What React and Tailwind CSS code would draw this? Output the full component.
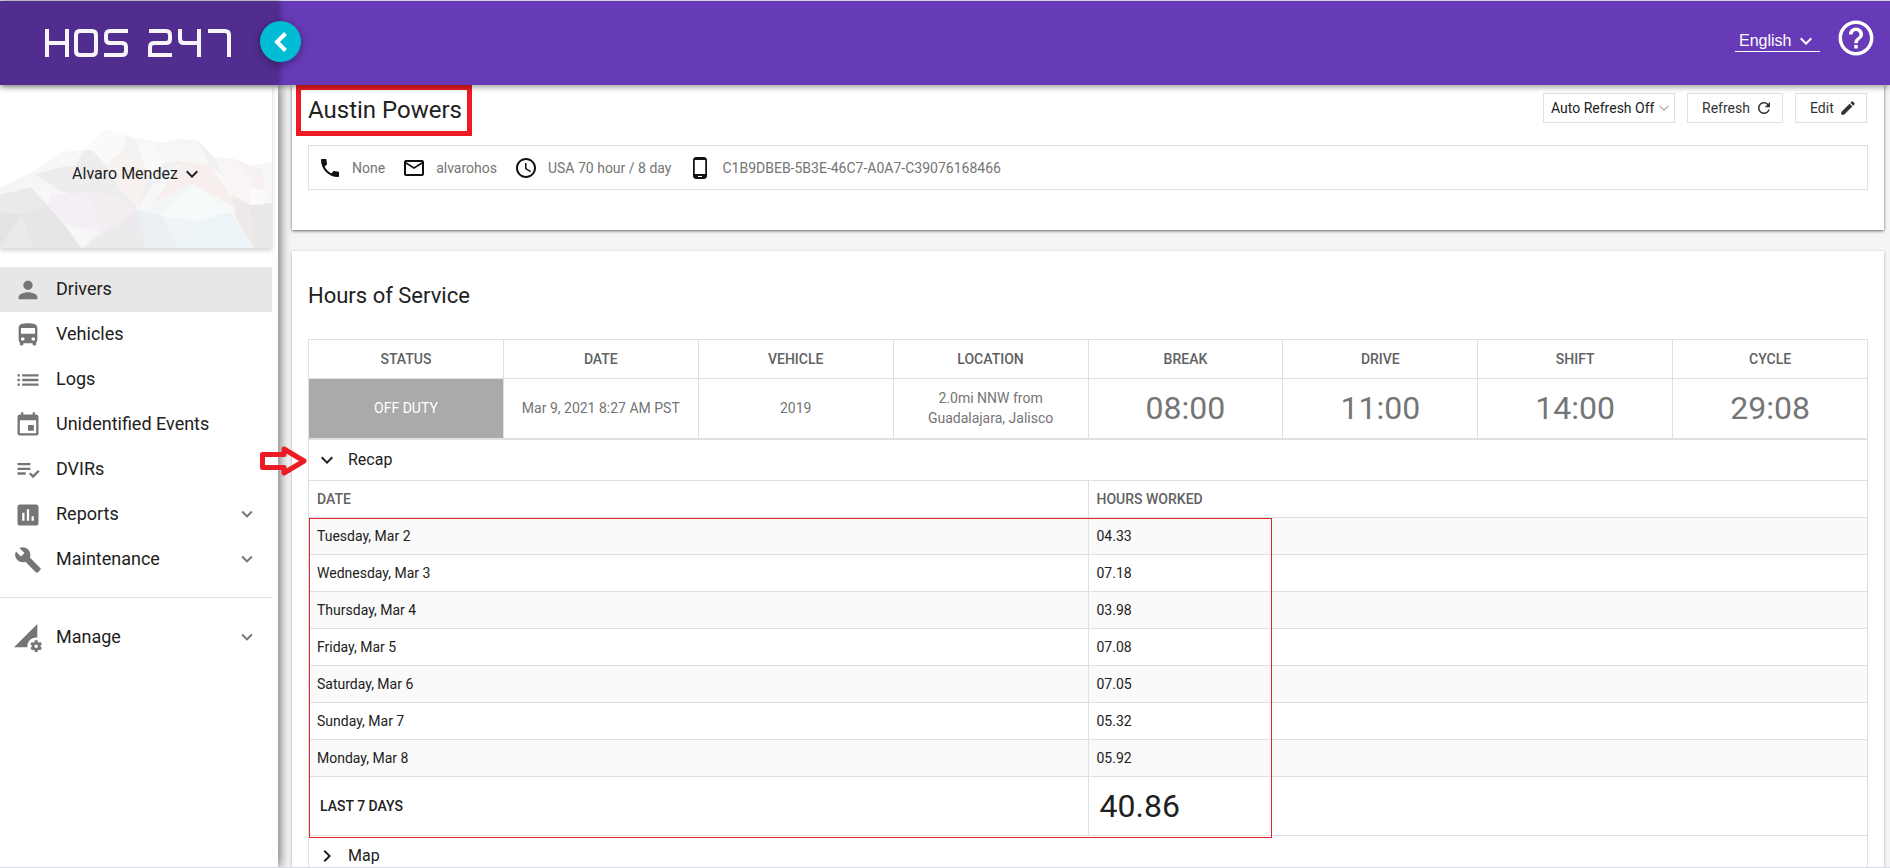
import { useState } from 'react'
import {
  MdPerson, MdDirectionsBus, MdList, MdEvent, MdPlaylistAddCheck, MdAssessment, MdBuild,
  MdPermDataSetting, MdExpandMore, MdChevronRight, MdPhone, MdMailOutline,
  MdAccessTime, MdPhoneAndroid, MdHelpOutline, MdRefresh, MdEdit,
} from 'react-icons/md'

const navItems = [
  { label: 'Drivers', icon: MdPerson, active: true },
  { label: 'Vehicles', icon: MdDirectionsBus },
  { label: 'Logs', icon: MdList },
  { label: 'Unidentified Events', icon: MdEvent },
  { label: 'DVIRs', icon: MdPlaylistAddCheck },
  { label: 'Reports', icon: MdAssessment, expandable: true },
  { label: 'Maintenance', icon: MdBuild, expandable: true },
]

const contact = [
  { icon: MdPhone, text: 'None' },
  { icon: MdMailOutline, text: 'alvarohos' },
  { icon: MdAccessTime, text: 'USA 70 hour / 8 day' },
  { icon: MdPhoneAndroid, text: 'C1B9DBEB-5B3E-46C7-A0A7-C39076168466' },
]

const recap = [
  ['Tuesday, Mar 2', '04.33'],
  ['Wednesday, Mar 3', '07.18'],
  ['Thursday, Mar 4', '03.98'],
  ['Friday, Mar 5', '07.08'],
  ['Saturday, Mar 6', '07.05'],
  ['Sunday, Mar 7', '05.32'],
  ['Monday, Mar 8', '05.92'],
]

const statusHeads = ['STATUS', 'DATE', 'VEHICLE', 'LOCATION', 'BREAK', 'DRIVE', 'SHIFT', 'CYCLE']
const clocks = ['08:00', '11:00', '14:00', '29:08']

function Logo() {
  return (
    <svg role="img" aria-label="HOS 247" className="h-7 w-[186px]" viewBox="0 0 186 28" fill="none" stroke="#f7f5fa" strokeWidth="4">
      <path d="M2 0V28M22 0V28M2 14H22" />
      <path d="M33 2H47Q51 2 51 6V22Q51 26 47 26H35Q31 26 31 22V6Q31 2 35 2" />
      <path d="M83 2H65Q61 2 61 6V10Q61 14 65 14H77Q81 14 81 18V22Q81 26 77 26H59" />
      <path d="M104 2H121Q125 2 125 6V10Q125 14 121 14H109Q105 14 105 18V26H127" />
      <path d="M135 0V10Q135 14 139 14H154M154 0V28" />
      <path d="M163 2H180Q184 2 184 6V28" />
    </svg>
  )
}

// Low-poly mountains behind the user name
function Mountains() {
  return (
    <svg className="absolute inset-0 h-full w-full" viewBox="0 0 272 163" preserveAspectRatio="none" aria-hidden="true">
      <path fill="#f7f7f7" d="M0 103L32 87L62 67L83 65L107 44L127 51L154 56L178 62L197 55L214 72L232 79L250 80L272 77V163H0Z" />
      <path fill="#ededee" d="M34 89L62 82L76 80L83 65L92 65L106 80L138 103L136 125L60 106Z" />
      <path fill="#fafafa" d="M83 65L107 44L127 51L123 66L106 80L92 65Z" />
      <path fill="#f4f1f1" d="M127 51L138 59L148 90L106 80L123 66Z" />
      <path fill="#fbfafa" d="M138 59L154 60L165 78L148 90Z" />
      <path fill="#f8f5f5" d="M154 60L178 54L197 55L182 76L165 78Z" />
      <path fill="#f7f1ef" d="M106 80L123 66L148 90L138 124L120 104Z" />
      <path fill="#eff0f1" d="M165 78L182 76L150 103L138 125L148 90Z" />
      <path fill="#f6efed" d="M182 76L210 80L240 125L192 99L150 124Z" />
      <path fill="#f1f1f1" d="M197 55L214 72L232 98L210 80Z" />
      <path fill="#faf5f5" d="M214 72L235 74L252 92L249 119L232 110Z" />
      <path fill="#f6f0f0" d="M235 74L262 85L267 119L249 119L252 92Z" />
      <path fill="#f6f6f6" d="M0 103L32 87L60 106L52 109L31 102L0 110Z" />
      <path fill="#e9eaec" d="M0 110L31 102L48 121L66 141L81 163H0Z" />
      <path fill="#e4e4e6" d="M0 127L22 129L0 163Z" />
      <path fill="#e6e5e7" d="M22 129L48 121L81 163H33Z" />
      <path fill="#f4eff4" d="M52 109L88 108L100 148L68 140L48 121Z" />
      <path fill="#f1edf1" d="M88 108L115 111L138 125L82 163L100 148Z" />
      <path fill="#eceaec" d="M138 125L146 163H82Z" />
      <path fill="#f3f5f7" d="M192 99L162 131L138 125Z" />
      <path fill="#eaf0f2" d="M138 125L162 131L178 163H146Z" />
      <path fill="#f7fafb" d="M192 99L230 127L198 136L162 131Z" />
      <path fill="#eff5f7" d="M162 131L198 136L178 163Z" />
      <path fill="#edf4f7" d="M198 136L230 127L254 163H178Z" />
      <path fill="#eeeaea" d="M232 110L249 119L254 163L236 133Z" />
      <path fill="#eae7e7" d="M249 119L272 118V163H254Z" />
      <path fill="#fbfaf9" d="M249 102L267 106L265 119L250 120Z" />
    </svg>
  )
}

function NavItem({ label, icon: Icon, active, expandable }) {
  return (
    <li>
      <a href="#" className={`flex h-[45px] items-center gap-[14px] px-[14px] text-lg text-[#212121] ${active ? 'bg-[#e7e7e7]' : ''}`}>
        <Icon className="size-7 shrink-0 text-[#757575]" />
        <span className="flex-1 pb-0.5">{label}</span>
        {expandable && <MdExpandMore className="mb-0.5 size-[22px] text-[#757575]" />}
      </a>
    </li>
  )
}

function Header() {
  return (
    <header className="relative z-20 flex h-[85px] shrink-0 border-t border-[#d5d0e0] bg-[#673ab7] text-white shadow-[0_2px_6px_rgba(0,0,0,0.4)]">
      <div className="relative flex w-[278px] shrink-0 items-center bg-[#512d8f] pl-[45px] shadow-[2px_0_6px_rgba(0,0,0,0.3)]">
        <Logo />
        <button aria-label="Collapse menu" className="absolute top-5 -right-[23px] flex size-[41px] items-center justify-center rounded-full bg-[#00bcd4] shadow-[0_2px_8px_rgba(0,0,0,0.4)]">
          <svg className="h-5 w-[13px]" viewBox="0 0 13 20" fill="none" stroke="currentColor" strokeWidth="4" aria-hidden="true">
            <path d="M11.500 1.500L3 10L11.500 18.500" />
          </svg>
        </button>
      </div>
      <div className="flex flex-1 items-start justify-end gap-[15px] pr-[13px]">
        <label className="relative mt-7 flex border-b border-white">
          <select aria-label="Language" className="h-[22px] w-[85px] appearance-none bg-transparent pt-0.5 pl-1 font-['Liberation_Sans',Arial,sans-serif] text-base leading-5 outline-none">
            <option>English</option>
          </select>
          <MdExpandMore className="pointer-events-none absolute top-0 right-[2px] size-6" />
        </label>
        <button aria-label="Help" className="mt-4">
          <MdHelpOutline className="size-[42px]" />
        </button>
      </div>
    </header>
  )
}

function Sidebar() {
  return (
    <aside className="w-[278px] shrink-0 bg-white pr-1.5 shadow-[2px_0_10px_rgba(0,0,0,0.55)]">
      <div className="relative h-[163px] shadow-[0_2px_5px_rgba(0,0,0,0.2)]">
        <Mountains />
        <button className="relative flex h-full w-full items-center justify-center gap-[2px] pt-[14px] pl-1 text-base text-[#212121]">
          Alvaro Mendez
          <MdExpandMore className="size-6" />
        </button>
      </div>
      <nav className="pt-[19px]">
        <ul>
          {navItems.map(item => <NavItem key={item.label} {...item} />)}
        </ul>
        <ul className="mt-[15px] border-t border-[#e0e0e0] pt-[17px]">
          <NavItem label="Manage" icon={MdPermDataSetting} expandable />
        </ul>
      </nav>
    </aside>
  )
}

function DriverCard() {
  return (
    <section className="bg-white px-4 pb-10 shadow-[0_1px_3px_rgba(0,0,0,0.6)]">
      <div className="flex h-[60px] items-start justify-between">
        <h1 className="-ml-3 border-[5px] border-[#ed1c24] pt-1.5 pr-[5px] pb-[7px] pl-[7px] text-2xl leading-7 text-[#212121]">Austin Powers</h1>
        <div className="flex gap-3 pt-2 pr-px text-sm text-[#333]">
          <label className="relative flex">
            <select aria-label="Auto refresh" className="h-[30px] w-[132px] appearance-none border border-[#e0e0e0] bg-white pl-[7px] text-[#212121] outline-none">
              <option>Auto Refresh Off</option>
            </select>
            <MdExpandMore className="pointer-events-none absolute top-[5px] right-[1px] size-5 text-[#bdbdbd]" />
          </label>
          <button className="flex h-[30px] w-24 items-center justify-between border border-[#e0e0e0] pr-[9px] pl-[14px]">
            Refresh <MdRefresh className="size-[18px]" />
          </button>
          <button className="flex h-[30px] w-[72px] items-center justify-between border border-[#e0e0e0] pr-[9px] pl-[14px]">
            Edit <MdEdit className="size-[18px]" />
          </button>
        </div>
      </div>
      <ul className="flex h-[45px] items-center gap-[17px] border border-[#e0e0e0] px-[9px] text-sm text-[#757575]">
        {contact.map(({ icon: Icon, text }) => (
          <li key={text} className="flex items-center gap-[10px]">
            <Icon className="size-6 text-[#111]" />
            {text}
          </li>
        ))}
      </ul>
    </section>
  )
}

function StatusTable() {
  return (
    <table className="w-full table-fixed border-collapse text-center text-sm text-[#757575]">
      <thead>
        <tr className="h-[39px] text-[#616161]">
          {statusHeads.map(h => <th key={h} className="border border-[#e0e0e0] font-medium">{h}</th>)}
        </tr>
      </thead>
      <tbody>
        <tr className="h-[60px]">
          <td className="border border-[#e0e0e0] bg-[#aaa] pb-0.5 text-white">OFF DUTY</td>
          <td className="border border-[#e0e0e0] pb-0.5">Mar 9, 2021 8:27 AM PST</td>
          <td className="border border-[#e0e0e0] pb-0.5">2019</td>
          <td className="border border-[#e0e0e0] px-6 pb-0.5 leading-5">2.0mi NNW from Guadalajara, Jalisco</td>
          {clocks.map(c => <td key={c} className="border border-[#e0e0e0] pb-0.5 text-[32px] leading-8">{c}</td>)}
        </tr>
      </tbody>
    </table>
  )
}

function RecapTable() {
  return (
    <div className="relative">
      <table className="w-full table-fixed text-left text-sm text-[#212121]">
        <thead>
          <tr className="h-[37px] border-y border-[#e0e0e0] text-[#616161]">
            <th className="border-r border-[#e0e0e0] pl-2 font-medium">DATE</th>
            <th className="pl-2 font-medium">HOURS WORKED</th>
          </tr>
        </thead>
        <tbody>
          {recap.map(([day, hours]) => (
            <tr key={day} className="h-[37px] border-b border-[#e0e0e0] odd:bg-[#fafafa]">
              <td className="border-r border-[#e0e0e0] pl-2">{day}</td>
              <td className="pl-2">{hours}</td>
            </tr>
          ))}
        </tbody>
        <tfoot>
          <tr className="h-[59px] border-b border-[#e0e0e0]">
            <th className="border-r border-[#e0e0e0] pl-[11px] font-medium">LAST 7 DAYS</th>
            <td className="pl-[11px] text-[32px] leading-8">40.86</td>
          </tr>
        </tfoot>
      </table>
      <div className="pointer-events-none absolute top-[38px] -bottom-[2px] left-0 w-[61.8%] border border-[#e3262d]" />
    </div>
  )
}

function SectionToggle({ label, open, onClick }) {
  const Icon = open ? MdExpandMore : MdChevronRight
  return (
    <button onClick={onClick} className="flex h-10 w-full items-center gap-[9px] pl-1.5 text-base text-[#212121]">
      <Icon className="size-6" />
      {label}
    </button>
  )
}

function HoursCard() {
  const [recapOpen, setRecapOpen] = useState(true)
  const [mapOpen, setMapOpen] = useState(false)

  return (
    <section className="mt-[21px] bg-white px-4 pt-[31px] shadow-[0_1px_3px_rgba(0,0,0,0.3)]">
      <h2 className="mb-[29px] text-[22px] leading-7 text-[#212121]">Hours of Service</h2>
      <StatusTable />
      <div className="relative border border-[#e0e0e0]">
        <svg className="absolute top-[6px] -left-[49px] h-[30px] w-[47px]" viewBox="0 0 47 30" fill="none" stroke="#ed1c24" strokeWidth="5" strokeLinejoin="round" aria-hidden="true">
          <path d="M2.500 8.500H24V3L44 15L24 27V21.500H2.500Z" />
        </svg>
        <SectionToggle label="Recap" open={recapOpen} onClick={() => setRecapOpen(!recapOpen)} />
        {recapOpen && <RecapTable />}
        <SectionToggle label="Map" open={mapOpen} onClick={() => setMapOpen(!mapOpen)} />
      </div>
    </section>
  )
}

export default function App() {
  return (
    <div className="flex h-screen flex-col overflow-hidden border-b border-[#d5d9e3] bg-[#f5f5f5] font-[Roboto,sans-serif]">
      <Header />
      <div className="flex min-h-0 flex-1">
        <Sidebar />
        <main className="relative z-10 min-w-0 flex-1 pr-1.5 pl-[14px]">
          <DriverCard />
          <HoursCard />
        </main>
      </div>
    </div>
  )
}
